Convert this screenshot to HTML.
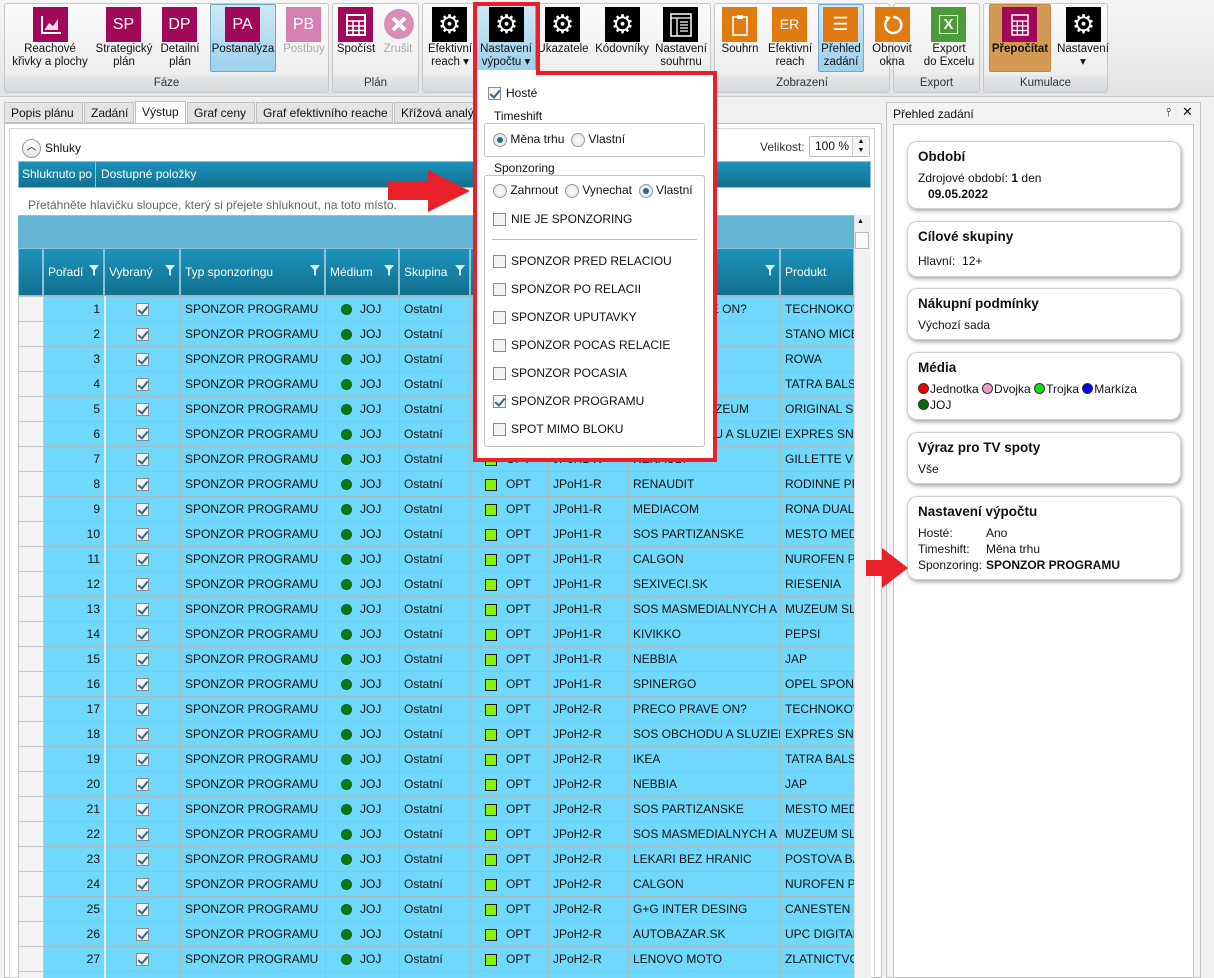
<!DOCTYPE html>
<html style="overflow:hidden"><head><meta charset="utf-8">
<style>
*{box-sizing:border-box;margin:0;padding:0}
html,body{width:1214px;height:978px;overflow:hidden}
body{background:#f0f0f0;font-family:"Liberation Sans",sans-serif;font-size:12px;color:#111;position:relative}
.a{position:absolute}
.grp{position:absolute;top:3px;height:90px;border:1px solid #c9c9c9;border-radius:3px;background:linear-gradient(#fbfbfb,#eaeaea)}
.grp .lb{position:absolute;left:0;right:0;bottom:0;height:17px;background:linear-gradient(#e6e9ec,#d6dadd);text-align:center;color:#333;font-size:11.5px;line-height:17px}
.ic{position:absolute;top:7px;width:35px;height:35px;color:#fff;font-size:16px;text-align:center;line-height:35px}
.ic.g{font-size:26px;line-height:34px}
.bl{position:absolute;top:43px;font-size:11.5px;text-align:center;line-height:13px;color:#111;white-space:nowrap}
.sel{position:absolute;top:4px;height:68px;background:linear-gradient(#cfe8f6,#9ed1ec);border:1px solid #6fa8c8;border-radius:2px}
.tab{position:absolute;top:102px;height:21px;border:1px solid #c2c2c2;background:#e4e4e4;font-size:12px;line-height:20px;padding-left:6px;color:#111;overflow:hidden;white-space:nowrap}
table{border-collapse:collapse;table-layout:fixed}
td{height:25px;border:1px solid #a9b9c0;white-space:nowrap;overflow:hidden;padding:0 4px;font-size:12px;background:#6fd8fb}
td.rh{background:#f2f2f2;border-color:#c8c8c8}
td.n{text-align:right}
.cb{display:inline-block;width:13px;height:13px;border:1px solid #8a8a8a;background:#f4f4f4;position:relative;vertical-align:middle}
.cb.k::after{content:"";position:absolute;left:3px;top:0px;width:4px;height:8px;border:solid #2a6a90;border-width:0 2px 2px 0;transform:rotate(40deg)}
.dot{display:inline-block;width:11px;height:11px;border-radius:50%;background:#0e7a0e;border:1px solid #063;vertical-align:middle;margin-right:8px}
.sq{display:inline-block;width:12px;height:12px;background:#88f200;border:1.5px solid #111;vertical-align:middle;margin-right:9px}
.hd{position:absolute;top:248px;height:48px;background:linear-gradient(#1d93bb,#11708f);border:1px solid #8cc3d6;color:#fff;font-size:12px;line-height:46px;padding-left:4px}
.flt{position:absolute;right:4px;top:16px;width:10px;height:11px}
.rad{display:inline-block;width:14px;height:14px;border-radius:50%;border:1px solid #999;background:radial-gradient(#fff,#ddd);vertical-align:middle;position:relative}
.rad.on::after{content:"";position:absolute;left:3px;top:3px;width:6px;height:6px;border-radius:50%;background:#1a6f8f}
.card{position:absolute;left:907px;width:274px;background:#fff;border:1px solid #cfcfcf;border-radius:10px;box-shadow:1px 2px 4px rgba(0,0,0,.35);padding:7px 10px;font-size:12px;line-height:16px}
.card b.t{font-size:13.5px;display:block;margin-bottom:5px}
.md{display:inline-block;width:11px;height:11px;border-radius:50%;border:1px solid #333;vertical-align:-1px;margin-right:1px}
.pi{position:absolute;left:493px;font-size:12px}
.pi .cb{margin-right:5px}
</style></head><body>

<!-- ribbon -->
<div class="a" style="left:0;top:0;width:1214px;height:97px;background:linear-gradient(#f5f5f5,#e4e4e4);border-bottom:1px solid #c8c8c8"></div>
<div class="grp" style="left:4px;width:325px"><div class="lb">Fáze</div></div>
<div class="grp" style="left:332px;width:87px"><div class="lb">Plán</div></div>
<div class="grp" style="left:422px;width:289px"><div class="lb"></div></div>
<div class="grp" style="left:714px;width:176px"><div class="lb">Zobrazení</div></div>
<div class="grp" style="left:893px;width:87px"><div class="lb">Export</div></div>
<div class="grp" style="left:983px;width:125px"><div class="lb">Kumulace</div></div>

<div class="sel" style="left:210px;width:66px"></div>
<div class="sel" style="left:476px;width:60px"></div>
<div class="sel" style="left:818px;width:46px"></div>
<div class="sel" style="left:989px;width:62px;background:#d29a52;border-color:#c0884a"></div>

<div class="ic" style="left:33px;background:#a0085a"><svg width="22" height="20" viewBox="0 0 22 20" style="margin-top:8px"><path d="M2 1V18H21" stroke="#fff" stroke-width="2" fill="none"/><path d="M5 14L9 8L13 11L18 4V15H5Z" fill="#fff" opacity=".85"/></svg></div>
<div class="bl" style="left:5px;width:90px">Reachové<br>křivky a plochy</div>
<div class="ic" style="left:106px;background:#a0085a">SP</div><div class="bl" style="left:93px;width:62px">Strategický<br>plán</div>
<div class="ic" style="left:162px;background:#a0085a">DP</div><div class="bl" style="left:155px;width:50px">Detailní<br>plán</div>
<div class="ic" style="left:225px;background:#a0085a">PA</div><div class="bl" style="left:210px;width:66px">Postanalýza</div>
<div class="ic" style="left:286px;background:#d580b0">PB</div><div class="bl" style="left:280px;width:48px;color:#aaa">Postbuy</div>
<div class="ic" style="left:338px;background:#a0085a"><svg width="20" height="22" viewBox="0 0 20 22" style="margin-top:7px"><rect x="1" y="1" width="18" height="20" fill="none" stroke="#fff" stroke-width="2"/><path d="M1 7H19M1 12H19M1 16.5H19M7 7V21M13 7V21" stroke="#fff" stroke-width="1.5"/></svg></div><div class="bl" style="left:334px;width:44px">Spočíst</div>
<div class="ic" style="left:381px;background:none"><svg width="34" height="34" viewBox="0 0 34 34"><circle cx="17" cy="17" r="15" fill="#d98cb6"/><path d="M11 11L23 23M23 11L11 23" stroke="#fff" stroke-width="4"/></svg></div><div class="bl" style="left:378px;width:40px;color:#aaa">Zrušit</div>
<div class="ic g" style="left:432px;background:#000">⚙</div><div class="bl" style="left:426px;width:48px">Efektivní<br>reach ▾</div>
<div class="ic g" style="left:489px;background:#000">⚙</div><div class="bl" style="left:476px;width:60px">Nastavení<br>výpočtu ▾</div>
<div class="ic g" style="left:545px;background:#000">⚙</div><div class="bl" style="left:537px;width:52px">Ukazatele</div>
<div class="ic g" style="left:605px;background:#000">⚙</div><div class="bl" style="left:592px;width:60px">Kódovníky</div>
<div class="ic" style="left:663px;background:#000"><svg width="22" height="24" viewBox="0 0 22 24" style="margin-top:6px"><rect x="1" y="1" width="20" height="22" fill="none" stroke="#fff" stroke-width="1.5"/><path d="M1 5H21M7 5V23M10 9H18M10 12H18M10 15H18M10 18H18" stroke="#fff" stroke-width="1.3"/></svg></div><div class="bl" style="left:652px;width:58px">Nastavení<br>souhrnu</div>
<div class="ic" style="left:722px;background:#e07b12"><svg width="16" height="22" viewBox="0 0 16 22" style="margin-top:7px"><rect x="1" y="3" width="14" height="18" fill="none" stroke="#fff" stroke-width="1.6"/><rect x="5" y="1" width="6" height="4" fill="#fff"/></svg></div><div class="bl" style="left:716px;width:48px">Souhrn</div>
<div class="ic" style="left:772px;background:#e07b12;font-size:14px">ER</div><div class="bl" style="left:764px;width:52px">Efektivní<br>reach</div>
<div class="ic" style="left:823px;background:#e07b12;font-size:18px">☰</div><div class="bl" style="left:818px;width:46px">Přehled<br>zadání</div>
<div class="ic" style="left:875px;background:#e07b12"><svg width="22" height="22" viewBox="0 0 22 22" style="margin-top:7px"><path d="M6 5A8 8 0 1 0 11 3" fill="none" stroke="#fff" stroke-width="2.5"/><path d="M3 2L9 3L5 8Z" fill="#fff"/></svg></div><div class="bl" style="left:866px;width:52px">Obnovit<br>okna</div>
<div class="ic" style="left:931px;background:#4d9a3a;font-weight:bold;font-size:15px"><span style="border:1.5px solid #fff;padding:0 3px">X</span></div><div class="bl" style="left:920px;width:58px">Export<br>do Excelu</div>
<div class="ic" style="left:1002px;background:#a0085a"><svg width="18" height="22" viewBox="0 0 18 22" style="margin-top:7px"><rect x="1" y="1" width="16" height="20" fill="none" stroke="#fff" stroke-width="1.5"/><path d="M1 7H17M1 12H17M1 16.5H17M6.3 7V21M11.6 7V21" stroke="#fff" stroke-width="1.2"/></svg></div><div class="bl" style="left:989px;width:62px;font-weight:bold;font-size:11.5px">Přepočítat</div>
<div class="ic g" style="left:1066px;background:#000">⚙</div><div class="bl" style="left:1054px;width:58px">Nastavení<br>▾</div>

<!-- tabs -->
<div class="tab" style="left:4px;width:79px">Popis plánu</div>
<div class="tab" style="left:84px;width:50px">Zadání</div>
<div class="tab" style="left:135px;width:51px;background:#fff;top:101px;height:23px;border-bottom:none">Výstup</div>
<div class="tab" style="left:187px;width:68px">Graf ceny</div>
<div class="tab" style="left:256px;width:137px">Graf efektivního reache</div>
<div class="tab" style="left:394px;width:90px">Křížová analýza</div>

<!-- main panel -->
<div class="a" style="left:4px;top:123px;width:878px;height:855px;background:#fff;border:1px solid #c2c2c2"></div>
<div class="a" style="left:9px;top:128px;width:866px;height:850px;border:1px solid #d4d4d4"></div>
<div class="a" style="left:22px;top:139px;width:19px;height:19px;border-radius:50%;border:1px solid #999;background:linear-gradient(#fff,#e4e4e4);text-align:center;font-size:10px;line-height:16px">︿</div>
<div class="a" style="left:45px;top:141px;font-size:12px">Shluky</div>
<div class="a" style="left:760px;top:140px;font-size:12px;color:#333">Velikost:</div>
<div class="a" style="left:809px;top:136px;width:61px;height:21px;border:1px solid #bbb;border-radius:2px;background:#fff;font-size:12px;line-height:19px;padding-left:5px">100 %</div>
<div class="a" style="left:852px;top:137px;width:17px;height:19px;border-left:1px solid #ccc;font-size:7px;line-height:9px;text-align:center;background:#f4f4f4">▲<br>▼</div>

<div class="a" style="left:18px;top:161px;width:853px;height:27px;background:linear-gradient(#1d93bb,#11708f);border:1px solid #8cc3d6"></div>
<div class="a" style="left:19px;top:162px;width:77px;height:25px;border-right:1px solid #8cc3d6;color:#fff;line-height:25px;padding-left:3px;font-size:12px;white-space:nowrap;overflow:hidden">Shluknuto po</div>
<div class="a" style="left:101px;top:162px;color:#fff;line-height:25px;font-size:12px">Dostupné položky</div>
<div class="a" style="left:28px;top:198px;color:#666;font-size:12px">Přetáhněte hlavičku sloupce, který si přejete shluknout, na toto místo.</div>

<div class="a" style="left:18px;top:215px;width:836px;height:33px;background:#62b4d2;border-top:1px solid #b6b6b6"></div>
<div class="a" style="left:18px;top:248px;width:25px;height:48px;background:linear-gradient(#1d93bb,#11708f);border:1px solid #8cc3d6"></div>
<div class="hd" style="left:43px;width:61px">Pořadí<svg class="flt" viewBox="0 0 10 11"><path d="M0 0H10L6 5V11L4 10V5Z" fill="#d8f0f8"/></svg></div>
<div class="hd" style="left:104px;width:76px">Vybraný<svg class="flt" viewBox="0 0 10 11"><path d="M0 0H10L6 5V11L4 10V5Z" fill="#d8f0f8"/></svg></div>
<div class="hd" style="left:180px;width:145px">Typ sponzoringu<svg class="flt" viewBox="0 0 10 11"><path d="M0 0H10L6 5V11L4 10V5Z" fill="#d8f0f8"/></svg></div>
<div class="hd" style="left:325px;width:74px">Médium<svg class="flt" viewBox="0 0 10 11"><path d="M0 0H10L6 5V11L4 10V5Z" fill="#d8f0f8"/></svg></div>
<div class="hd" style="left:399px;width:71px">Skupina<svg class="flt" viewBox="0 0 10 11"><path d="M0 0H10L6 5V11L4 10V5Z" fill="#d8f0f8"/></svg></div>
<div class="hd" style="left:470px;width:78px"></div>
<div class="hd" style="left:548px;width:80px"></div>
<div class="hd" style="left:628px;width:152px"><svg class="flt" viewBox="0 0 10 11"><path d="M0 0H10L6 5V11L4 10V5Z" fill="#d8f0f8"/></svg></div>
<div class="hd" style="left:780px;width:74px">Produkt</div>
<div class="a" style="left:854px;top:215px;width:17px;height:763px;background:#f0f0f0;border-left:1px solid #ddd"></div>
<div class="a" style="left:857px;top:218px;font-size:7px">▲</div>
<div class="a" style="left:855px;top:232px;width:14px;height:17px;border:1px solid #bbb;background:#fafafa"></div>

<div class="a" style="left:18px;top:296px;width:836px;height:682px;overflow:hidden">
<table style="width:836px">
<colgroup><col style="width:25px"><col style="width:61px"><col style="width:76px"><col style="width:145px"><col style="width:74px"><col style="width:71px"><col style="width:78px"><col style="width:80px"><col style="width:152px"><col style="width:74px"></colgroup>
<tbody>
<tr><td class="rh"></td><td class="n">1</td><td style="text-align:center"><span class="cb k"></span></td><td>SPONZOR PROGRAMU</td><td style="padding-left:15px"><span class="dot"></span>JOJ</td><td>Ostatní</td><td style="padding-left:14px"><span class="sq"></span>OPT</td><td>JPoH2-R</td><td>PRECO PRAVE ON?</td><td>TECHNOKOV</td></tr>
<tr><td class="rh"></td><td class="n">2</td><td style="text-align:center"><span class="cb k"></span></td><td>SPONZOR PROGRAMU</td><td style="padding-left:15px"><span class="dot"></span>JOJ</td><td>Ostatní</td><td style="padding-left:14px"><span class="sq"></span>OPT</td><td>JPoH2-R</td><td>NEBBIA</td><td>STANO MICE</td></tr>
<tr><td class="rh"></td><td class="n">3</td><td style="text-align:center"><span class="cb k"></span></td><td>SPONZOR PROGRAMU</td><td style="padding-left:15px"><span class="dot"></span>JOJ</td><td>Ostatní</td><td style="padding-left:14px"><span class="sq"></span>OPT</td><td>JPoH2-R</td><td>IKEA</td><td>ROWA</td></tr>
<tr><td class="rh"></td><td class="n">4</td><td style="text-align:center"><span class="cb k"></span></td><td>SPONZOR PROGRAMU</td><td style="padding-left:15px"><span class="dot"></span>JOJ</td><td>Ostatní</td><td style="padding-left:14px"><span class="sq"></span>OPT</td><td>JPoH2-R</td><td>KIVIKKO</td><td>TATRA BALSAM</td></tr>
<tr><td class="rh"></td><td class="n">5</td><td style="text-align:center"><span class="cb k"></span></td><td>SPONZOR PROGRAMU</td><td style="padding-left:15px"><span class="dot"></span>JOJ</td><td>Ostatní</td><td style="padding-left:14px"><span class="sq"></span>OPT</td><td>JPoH1-R</td><td>NARODNE MUZEUM</td><td>ORIGINAL SP</td></tr>
<tr><td class="rh"></td><td class="n">6</td><td style="text-align:center"><span class="cb k"></span></td><td>SPONZOR PROGRAMU</td><td style="padding-left:15px"><span class="dot"></span>JOJ</td><td>Ostatní</td><td style="padding-left:14px"><span class="sq"></span>OPT</td><td>JPoH1-R</td><td>SOS OBCHODU A SLUZIEB</td><td>EXPRES SNOW</td></tr>
<tr><td class="rh"></td><td class="n">7</td><td style="text-align:center"><span class="cb k"></span></td><td>SPONZOR PROGRAMU</td><td style="padding-left:15px"><span class="dot"></span>JOJ</td><td>Ostatní</td><td style="padding-left:14px"><span class="sq"></span>OPT</td><td>JPoH1-R</td><td>RENAULT</td><td>GILLETTE VENUS</td></tr>
<tr><td class="rh"></td><td class="n">8</td><td style="text-align:center"><span class="cb k"></span></td><td>SPONZOR PROGRAMU</td><td style="padding-left:15px"><span class="dot"></span>JOJ</td><td>Ostatní</td><td style="padding-left:14px"><span class="sq"></span>OPT</td><td>JPoH1-R</td><td>RENAUDIT</td><td>RODINNE PRO</td></tr>
<tr><td class="rh"></td><td class="n">9</td><td style="text-align:center"><span class="cb k"></span></td><td>SPONZOR PROGRAMU</td><td style="padding-left:15px"><span class="dot"></span>JOJ</td><td>Ostatní</td><td style="padding-left:14px"><span class="sq"></span>OPT</td><td>JPoH1-R</td><td>MEDIACOM</td><td>RONA DUALIT</td></tr>
<tr><td class="rh"></td><td class="n">10</td><td style="text-align:center"><span class="cb k"></span></td><td>SPONZOR PROGRAMU</td><td style="padding-left:15px"><span class="dot"></span>JOJ</td><td>Ostatní</td><td style="padding-left:14px"><span class="sq"></span>OPT</td><td>JPoH1-R</td><td>SOS PARTIZANSKE</td><td>MESTO MEDZ</td></tr>
<tr><td class="rh"></td><td class="n">11</td><td style="text-align:center"><span class="cb k"></span></td><td>SPONZOR PROGRAMU</td><td style="padding-left:15px"><span class="dot"></span>JOJ</td><td>Ostatní</td><td style="padding-left:14px"><span class="sq"></span>OPT</td><td>JPoH1-R</td><td>CALGON</td><td>NUROFEN PR</td></tr>
<tr><td class="rh"></td><td class="n">12</td><td style="text-align:center"><span class="cb k"></span></td><td>SPONZOR PROGRAMU</td><td style="padding-left:15px"><span class="dot"></span>JOJ</td><td>Ostatní</td><td style="padding-left:14px"><span class="sq"></span>OPT</td><td>JPoH1-R</td><td>SEXIVECI.SK</td><td>RIESENIA</td></tr>
<tr><td class="rh"></td><td class="n">13</td><td style="text-align:center"><span class="cb k"></span></td><td>SPONZOR PROGRAMU</td><td style="padding-left:15px"><span class="dot"></span>JOJ</td><td>Ostatní</td><td style="padding-left:14px"><span class="sq"></span>OPT</td><td>JPoH1-R</td><td>SOS MASMEDIALNYCH A II</td><td>MUZEUM SLO</td></tr>
<tr><td class="rh"></td><td class="n">14</td><td style="text-align:center"><span class="cb k"></span></td><td>SPONZOR PROGRAMU</td><td style="padding-left:15px"><span class="dot"></span>JOJ</td><td>Ostatní</td><td style="padding-left:14px"><span class="sq"></span>OPT</td><td>JPoH1-R</td><td>KIVIKKO</td><td>PEPSI</td></tr>
<tr><td class="rh"></td><td class="n">15</td><td style="text-align:center"><span class="cb k"></span></td><td>SPONZOR PROGRAMU</td><td style="padding-left:15px"><span class="dot"></span>JOJ</td><td>Ostatní</td><td style="padding-left:14px"><span class="sq"></span>OPT</td><td>JPoH1-R</td><td>NEBBIA</td><td>JAP</td></tr>
<tr><td class="rh"></td><td class="n">16</td><td style="text-align:center"><span class="cb k"></span></td><td>SPONZOR PROGRAMU</td><td style="padding-left:15px"><span class="dot"></span>JOJ</td><td>Ostatní</td><td style="padding-left:14px"><span class="sq"></span>OPT</td><td>JPoH1-R</td><td>SPINERGO</td><td>OPEL SPONZ</td></tr>
<tr><td class="rh"></td><td class="n">17</td><td style="text-align:center"><span class="cb k"></span></td><td>SPONZOR PROGRAMU</td><td style="padding-left:15px"><span class="dot"></span>JOJ</td><td>Ostatní</td><td style="padding-left:14px"><span class="sq"></span>OPT</td><td>JPoH2-R</td><td>PRECO PRAVE ON?</td><td>TECHNOKOV</td></tr>
<tr><td class="rh"></td><td class="n">18</td><td style="text-align:center"><span class="cb k"></span></td><td>SPONZOR PROGRAMU</td><td style="padding-left:15px"><span class="dot"></span>JOJ</td><td>Ostatní</td><td style="padding-left:14px"><span class="sq"></span>OPT</td><td>JPoH2-R</td><td>SOS OBCHODU A SLUZIEB</td><td>EXPRES SNO</td></tr>
<tr><td class="rh"></td><td class="n">19</td><td style="text-align:center"><span class="cb k"></span></td><td>SPONZOR PROGRAMU</td><td style="padding-left:15px"><span class="dot"></span>JOJ</td><td>Ostatní</td><td style="padding-left:14px"><span class="sq"></span>OPT</td><td>JPoH2-R</td><td>IKEA</td><td>TATRA BALSA</td></tr>
<tr><td class="rh"></td><td class="n">20</td><td style="text-align:center"><span class="cb k"></span></td><td>SPONZOR PROGRAMU</td><td style="padding-left:15px"><span class="dot"></span>JOJ</td><td>Ostatní</td><td style="padding-left:14px"><span class="sq"></span>OPT</td><td>JPoH2-R</td><td>NEBBIA</td><td>JAP</td></tr>
<tr><td class="rh"></td><td class="n">21</td><td style="text-align:center"><span class="cb k"></span></td><td>SPONZOR PROGRAMU</td><td style="padding-left:15px"><span class="dot"></span>JOJ</td><td>Ostatní</td><td style="padding-left:14px"><span class="sq"></span>OPT</td><td>JPoH2-R</td><td>SOS PARTIZANSKE</td><td>MESTO MEDZ</td></tr>
<tr><td class="rh"></td><td class="n">22</td><td style="text-align:center"><span class="cb k"></span></td><td>SPONZOR PROGRAMU</td><td style="padding-left:15px"><span class="dot"></span>JOJ</td><td>Ostatní</td><td style="padding-left:14px"><span class="sq"></span>OPT</td><td>JPoH2-R</td><td>SOS MASMEDIALNYCH A II</td><td>MUZEUM SLO</td></tr>
<tr><td class="rh"></td><td class="n">23</td><td style="text-align:center"><span class="cb k"></span></td><td>SPONZOR PROGRAMU</td><td style="padding-left:15px"><span class="dot"></span>JOJ</td><td>Ostatní</td><td style="padding-left:14px"><span class="sq"></span>OPT</td><td>JPoH2-R</td><td>LEKARI BEZ HRANIC</td><td>POSTOVA BA</td></tr>
<tr><td class="rh"></td><td class="n">24</td><td style="text-align:center"><span class="cb k"></span></td><td>SPONZOR PROGRAMU</td><td style="padding-left:15px"><span class="dot"></span>JOJ</td><td>Ostatní</td><td style="padding-left:14px"><span class="sq"></span>OPT</td><td>JPoH2-R</td><td>CALGON</td><td>NUROFEN PR</td></tr>
<tr><td class="rh"></td><td class="n">25</td><td style="text-align:center"><span class="cb k"></span></td><td>SPONZOR PROGRAMU</td><td style="padding-left:15px"><span class="dot"></span>JOJ</td><td>Ostatní</td><td style="padding-left:14px"><span class="sq"></span>OPT</td><td>JPoH2-R</td><td>G+G INTER DESING</td><td>CANESTEN G</td></tr>
<tr><td class="rh"></td><td class="n">26</td><td style="text-align:center"><span class="cb k"></span></td><td>SPONZOR PROGRAMU</td><td style="padding-left:15px"><span class="dot"></span>JOJ</td><td>Ostatní</td><td style="padding-left:14px"><span class="sq"></span>OPT</td><td>JPoH2-R</td><td>AUTOBAZAR.SK</td><td>UPC DIGITAL</td></tr>
<tr><td class="rh"></td><td class="n">27</td><td style="text-align:center"><span class="cb k"></span></td><td>SPONZOR PROGRAMU</td><td style="padding-left:15px"><span class="dot"></span>JOJ</td><td>Ostatní</td><td style="padding-left:14px"><span class="sq"></span>OPT</td><td>JPoH2-R</td><td>LENOVO MOTO</td><td>ZLATNICTVO</td></tr>
<tr><td class="rh"></td><td></td><td></td><td></td><td></td><td></td><td></td><td></td><td></td><td></td></tr>
</tbody></table></div>
<div class="a" style="left:104px;top:296px;width:2px;height:682px;background:#fff;opacity:.7"></div>

<!-- popup -->
<div class="a" style="left:473px;top:71px;width:244px;height:391px;border:4px solid #e8202a;background:#fff"></div>
<div class="a" style="left:473px;top:2px;width:67px;height:72px;border:4px solid #e8202a;border-bottom:none"></div>
<div class="a" style="left:477px;top:70px;width:59px;height:6px;background:#fff"></div>
<div class="pi" style="left:488px;top:86px"><span class="cb k"></span>Hosté</div>
<div class="a" style="left:484px;top:123px;width:221px;height:34px;border:1px solid #c4c4c4;border-radius:3px"></div>
<div class="a" style="left:490px;top:109px;background:#fff;padding:0 4px;font-size:12px">Timeshift</div>
<div class="pi" style="top:132px"><span class="rad on"></span> Měna trhu &nbsp;<span class="rad"></span> Vlastní</div>
<div class="a" style="left:484px;top:175px;width:221px;height:272px;border:1px solid #c4c4c4;border-radius:3px"></div>
<div class="a" style="left:490px;top:161px;background:#fff;padding:0 4px;font-size:12px">Sponzoring</div>
<div class="pi" style="top:183px"><span class="rad"></span> Zahrnout &nbsp;<span class="rad"></span> Vynechat &nbsp;<span class="rad on"></span> Vlastní</div>
<div class="pi" style="top:212px"><span class="cb"></span>NIE JE SPONZORING</div>
<div class="a" style="left:492px;top:239px;width:205px;height:1px;background:#bbb"></div>
<div class="pi" style="top:254px"><span class="cb"></span>SPONZOR PRED RELACIOU</div>
<div class="pi" style="top:282px"><span class="cb"></span>SPONZOR PO RELACII</div>
<div class="pi" style="top:310px"><span class="cb"></span>SPONZOR UPUTAVKY</div>
<div class="pi" style="top:338px"><span class="cb"></span>SPONZOR POCAS RELACIE</div>
<div class="pi" style="top:366px"><span class="cb"></span>SPONZOR POCASIA</div>
<div class="pi" style="top:394px"><span class="cb k"></span>SPONZOR PROGRAMU</div>
<div class="pi" style="top:422px"><span class="cb"></span>SPOT MIMO BLOKU</div>

<!-- right panel -->
<div class="a" style="left:886px;top:102px;width:315px;height:876px;background:#f3f3f3;border:1px solid #c4c4c4"></div>
<div class="a" style="left:893px;top:107px;font-size:12px">Přehled zadání</div>
<div class="a" style="left:1166px;top:105px;font-size:12px">⫯</div>
<div class="a" style="left:1182px;top:104px;font-size:13px">✕</div>
<div class="a" style="left:893px;top:124px;width:301px;height:854px;background:#fff;border:1px solid #c4c4c4"></div>
<div class="card" style="top:141px;height:68px"><b class="t">Období</b>Zdrojové období: <b>1</b> den<br><b style="margin-left:10px">09.05.2022</b></div>
<div class="card" style="top:221px;height:56px"><b class="t">Cílové skupiny</b><div style="margin-top:8px">Hlavní:&nbsp; 12+</div></div>
<div class="card" style="top:288px;height:52px"><b class="t">Nákupní podmínky</b>Výchozí sada</div>
<div class="card" style="top:352px;height:68px"><b class="t">Média</b><span class="md" style="background:#e00"></span>Jednotka <span class="md" style="background:#f39ac6"></span>Dvojka <span class="md" style="background:#1d1"></span>Trojka <span class="md" style="background:#00e"></span>Markíza<br><span class="md" style="background:#0a6a0a"></span>JOJ</div>
<div class="card" style="top:432px;height:52px"><b class="t">Výraz pro TV spoty</b>Vše</div>
<div class="card" style="top:496px;height:84px"><b class="t">Nastavení výpočtu</b><div style="line-height:16px">Hosté:<span class="a" style="left:78px">Ano</span><br>Timeshift:<span class="a" style="left:78px">Měna trhu</span><br>Sponzoring:<b class="a" style="left:78px">SPONZOR PROGRAMU</b></div></div>

<!-- arrows -->
<svg class="a" style="left:386px;top:168px" width="86" height="46" viewBox="0 0 86 46"><path d="M2 14H42V2L84 23L42 44V32H2Z" fill="#e8202a"/></svg>
<svg class="a" style="left:864px;top:546px" width="46" height="44" viewBox="0 0 46 44"><path d="M2 14H18V2L44 22L18 42V30H2Z" fill="#e8202a"/></svg>
</body></html>
